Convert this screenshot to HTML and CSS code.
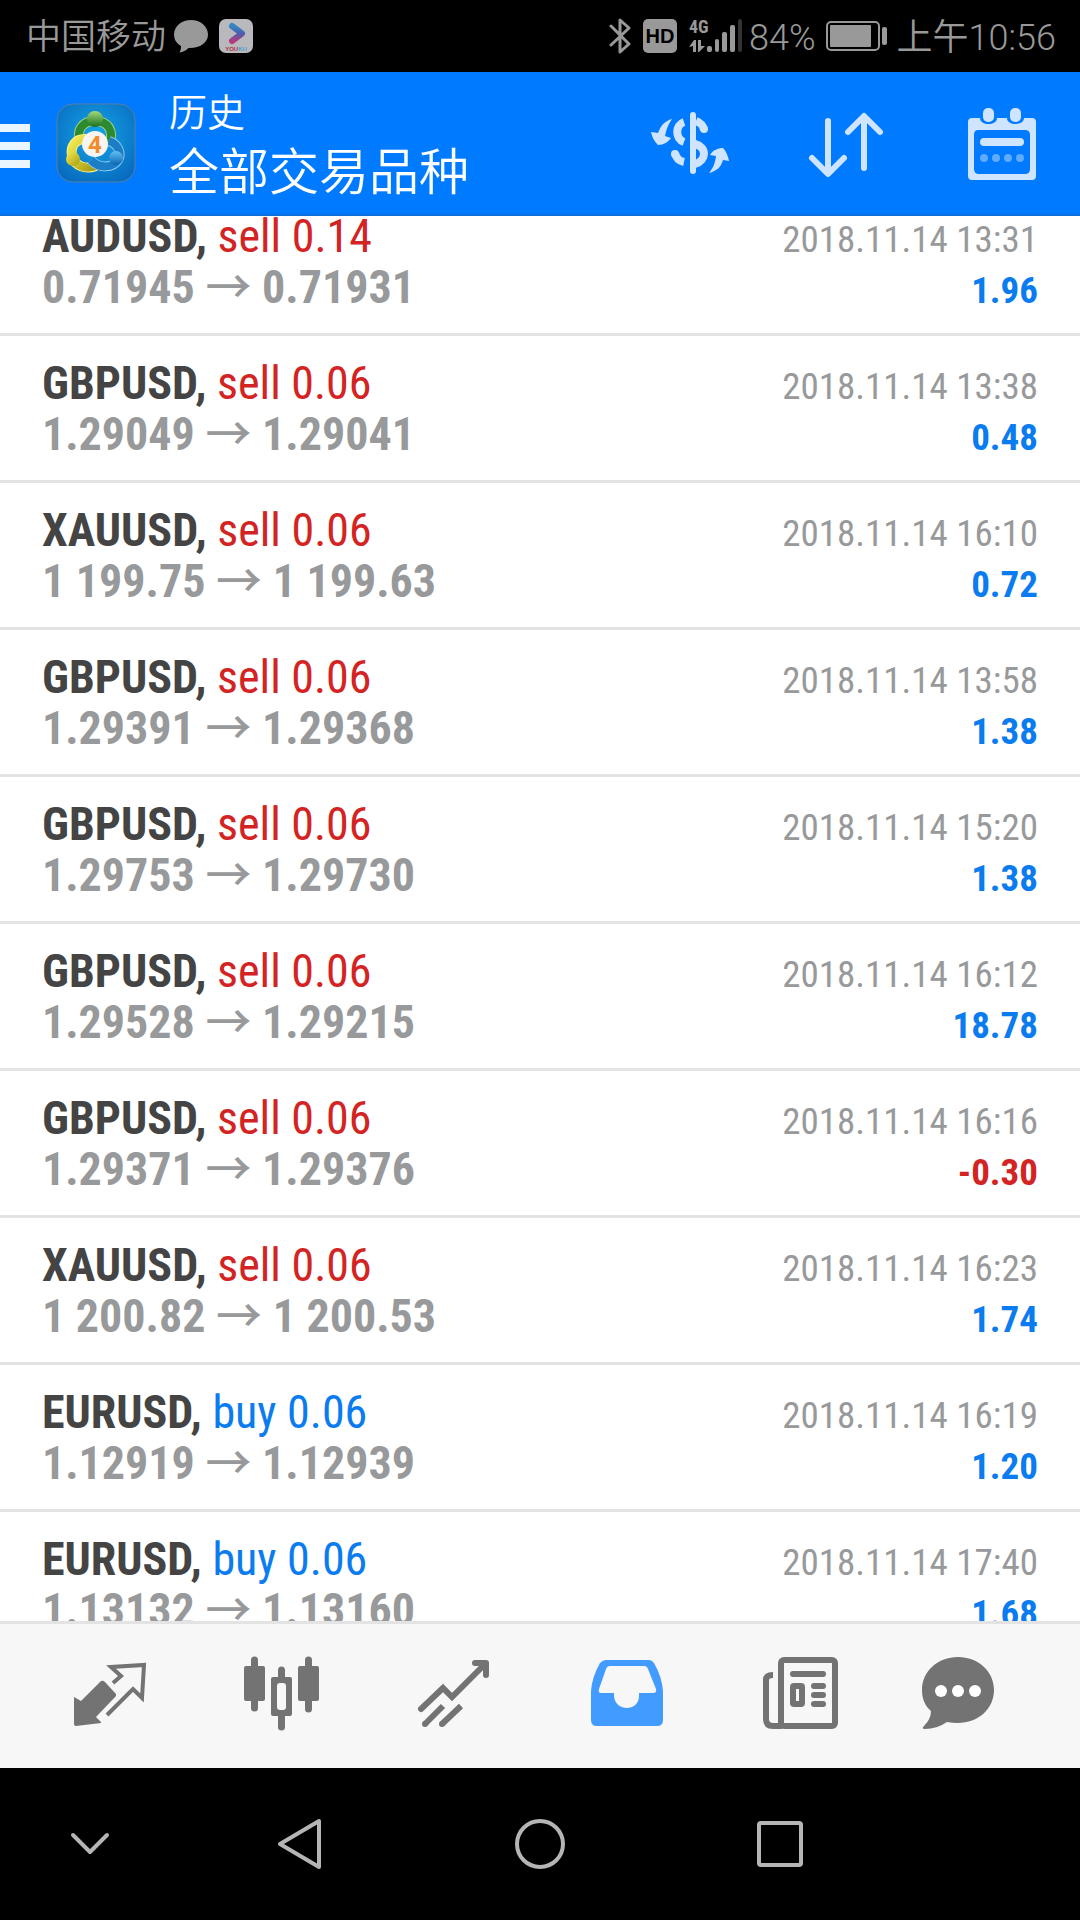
FILE: index.html
```html
<!DOCTYPE html>
<html lang="zh-CN">
<head>
<meta charset="utf-8">
<meta name="viewport" content="width=device-width, initial-scale=1">
<title>历史</title>
<link rel="stylesheet" href="styles.css">
</head>
<body>
<div class="app">
  <div class="status">
    <div class="status-side">
      <span class="status-text carrier">中国移动</span>
      <svg class="status-bubble" width="34" height="34" viewBox="0 0 34 34" aria-hidden="true"><path fill="#999" d="M17 1C8 1 0 7 0 15.500c0 5 2.500 9 7 11.500 0 3-.5 4.500-1.500 6.500 3.500-.5 6.500-2 9-4.500 11 .5 19.500-5 19.500-13.500C34 7 26 1 17 1z"/></svg>
      <svg width="34" height="34" viewBox="0 0 34 34" aria-hidden="true"><defs><linearGradient id="yk" x1="0" y1="0" x2="0" y2="1"><stop offset="0" stop-color="#3486c4"/><stop offset=".5" stop-color="#4a5fb0"/><stop offset="1" stop-color="#b5397c"/></linearGradient></defs><rect width="34" height="34" rx="7" fill="#b9b9bd"/><path d="M13 7l10 7.500L13 22" fill="none" stroke="url(#yk)" stroke-width="6" stroke-linecap="round" stroke-linejoin="round"/><text x="17" y="32" text-anchor="middle" class="tiny"><tspan fill="#b3323f">YOU</tspan><tspan fill="#4b9ccb">KU</tspan></text></svg>
    </div>
    <div class="status-side">
      <svg class="bluetooth" width="22" height="36" viewBox="0 0 22 36" fill="none" stroke="#999" stroke-width="3" stroke-linejoin="round" stroke-linecap="round" aria-label="蓝牙"><path d="M2 8l18 18-9 8V2l9 8L2 27"/></svg>
      <svg class="hd" width="34" height="34" viewBox="0 0 34 34" aria-hidden="true"><rect width="34" height="34" rx="5" fill="#999"/><text x="17" y="24" text-anchor="middle" class="hd-text">HD</text></svg>
      <svg class="signal" width="54" height="36" viewBox="0 0 54 36" fill="#999" aria-hidden="true"><text x="0" y="15" class="net-text">4G</text><path d="M0 29l5-7 2 0v12H4v-6zM9 22h3v6h4l-6 6H9z"/><rect x="18" y="28" width="5" height="6" rx="2"/><rect x="26" y="21" width="4" height="13" rx="2"/><rect x="33" y="14" width="5" height="20" rx="2"/><rect x="41" y="7" width="5" height="27" rx="2"/><rect x="49" y="1" width="4" height="33" rx="2" fill="#333"/></svg>
      <span class="status-text">84%</span>
      <svg class="battery" width="61" height="30" viewBox="0 0 61 30" aria-label="电池"><rect x="1" y="1" width="52" height="28" rx="4" fill="none" stroke="#999" stroke-width="2"/><rect x="4" y="4" width="41" height="22" rx="1" fill="#999"/><rect x="56" y="6" width="5" height="18" rx="2" fill="#999"/></svg>
      <span class="status-text">上午10:56</span>
    </div>
  </div>

  <header class="header">
    <button class="menu" type="button" aria-label="菜单"><span></span><span></span><span></span></button>
    <svg class="logo" width="80" height="80" viewBox="0 0 80 80" aria-hidden="true">
      <defs>
        <radialGradient id="bg" cx=".5" cy=".4" r=".7"><stop offset="0" stop-color="#16a5e6"/><stop offset="1" stop-color="#0768bd"/></radialGradient>
        <linearGradient id="gr" x1="0" y1="0" x2="0" y2="1"><stop offset="0" stop-color="#a5da79"/><stop offset="1" stop-color="#19701f"/></linearGradient>
        <linearGradient id="ye" x1="0" y1="0" x2="1" y2="1"><stop offset="0" stop-color="#f5ed51"/><stop offset="1" stop-color="#a79a12"/></linearGradient>
        <linearGradient id="bl" x1="0" y1="0" x2="0" y2="1"><stop offset="0" stop-color="#62c0f2"/><stop offset="1" stop-color="#0c65b1"/></linearGradient>
      </defs>
      <rect x="1" y="1" width="78" height="78" rx="16" fill="url(#bg)" stroke="#567fa5" stroke-width="1"/>
      <path d="M25 40C19 27 27 18 39 18s20 9 14 24" fill="none" stroke="#9ed284" stroke-width="10"/>
      <path d="M25 40C19 27 27 18 39 18s20 9 14 24" fill="none" stroke="#2c8a30" stroke-width="8"/>
      <path d="M30 36c-10-1-16 7-14 17 3 10 13 14 24 10" fill="none" stroke="#f7f28e" stroke-width="10"/>
      <path d="M30 36c-10-1-16 7-14 17 3 10 13 14 24 10" fill="none" stroke="url(#ye)" stroke-width="8"/>
      <path d="M53 38c9 3 13 12 9 19-5 8-19 9-27 0" fill="none" stroke="#86cbf0" stroke-width="10"/>
      <path d="M53 38c9 3 13 12 9 19-5 8-19 9-27 0" fill="none" stroke="#1c7cc6" stroke-width="8"/>
      <circle cx="39" cy="16" r="8" fill="url(#gr)"/><circle cx="17" cy="56" r="7" fill="url(#ye)"/><circle cx="60" cy="55" r="7" fill="url(#bl)"/>
      <circle cx="39" cy="41" r="13" fill="#f7f4f2"/><text x="39" y="50" text-anchor="middle" class="logo-text">4</text>
    </svg>
    <div class="titles"><h1>历史</h1><p>全部交易品种</p></div>
    <div class="actions">
      <button type="button" aria-label="货币"><svg width="80" height="76" viewBox="0 0 80 76"><path d="M1 27l7 1C11 20 15 16 22 14 18 20 16 25 15 31l6 2c-3 4-7 7-13 7C4 36 2 32 1 27zM79 56c-1-5-3-10-6-13-5 0-10 2-13 7l6 1c-1 8-3 12-7 17 8-2 12-6 14-13z" fill="#cfe5ff"/><path d="M34 17c-9 3-9 17 0 20M25 48c1 5 4 8 9 9M46 16c5 2 7 4 8 9M45 39c12 3 12 16 0 20" fill="none" stroke="#cfe5ff" stroke-width="8"/><circle cx="54" cy="24" r="4" fill="#cfe5ff"/><circle cx="25" cy="49" r="4" fill="#cfe5ff"/><path d="M43 10v56" stroke="#cfe5ff" stroke-width="6" stroke-linecap="round"/></svg></button>
      <button type="button" aria-label="排序"><svg width="80" height="76" viewBox="0 0 80 76" fill="none" stroke="#cfe5ff" stroke-width="6" stroke-linecap="round" stroke-linejoin="round"><path d="M22 16v52M6 53l16 16 16-16M58 63V12M42 27l16-16 16 16"/></svg></button>
      <button type="button" aria-label="日期"><svg width="80" height="76" viewBox="0 0 80 76"><path fill="#cfe5ff" fill-rule="evenodd" d="M10 13h8c0 8 17 8 17 0h10c0 8 17 8 17 0h8q4 0 4 4v54q0 4-4 4H10q-4 0-4-4V17q0-4 4-4zm6 12q-4 0-4 5v34q0 5 5 5h46q5 0 5-5V30q0-5-5-5z"/><rect x="21" y="3" width="11" height="14" rx="5" fill="#cfe5ff"/><rect x="48" y="3" width="11" height="14" rx="5" fill="#cfe5ff"/><rect x="18" y="33" width="44" height="8" rx="4" fill="#cfe5ff"/><g fill="#5fabff"><circle cx="22" cy="53" r="4"/><circle cx="34" cy="53" r="4"/><circle cx="46" cy="53" r="4"/><circle cx="58" cy="53" r="4"/></g></svg></button>
    </div>
  </header>

  <main class="history">
    <ul class="deals">
      <li><div class="line"><span class="deal"><b>AUDUSD,</b> <span class="sell">sell 0.14</span></span><time>2018.11.14 13:31</time></div><div class="line"><span class="price">0.71945 <i>→</i> 0.71931</span><span class="profit">1.96</span></div></li>
      <li><div class="line"><span class="deal"><b>GBPUSD,</b> <span class="sell">sell 0.06</span></span><time>2018.11.14 13:38</time></div><div class="line"><span class="price">1.29049 <i>→</i> 1.29041</span><span class="profit">0.48</span></div></li>
      <li><div class="line"><span class="deal"><b>XAUUSD,</b> <span class="sell">sell 0.06</span></span><time>2018.11.14 16:10</time></div><div class="line"><span class="price">1 199.75 <i>→</i> 1 199.63</span><span class="profit">0.72</span></div></li>
      <li><div class="line"><span class="deal"><b>GBPUSD,</b> <span class="sell">sell 0.06</span></span><time>2018.11.14 13:58</time></div><div class="line"><span class="price">1.29391 <i>→</i> 1.29368</span><span class="profit">1.38</span></div></li>
      <li><div class="line"><span class="deal"><b>GBPUSD,</b> <span class="sell">sell 0.06</span></span><time>2018.11.14 15:20</time></div><div class="line"><span class="price">1.29753 <i>→</i> 1.29730</span><span class="profit">1.38</span></div></li>
      <li><div class="line"><span class="deal"><b>GBPUSD,</b> <span class="sell">sell 0.06</span></span><time>2018.11.14 16:12</time></div><div class="line"><span class="price">1.29528 <i>→</i> 1.29215</span><span class="profit">18.78</span></div></li>
      <li><div class="line"><span class="deal"><b>GBPUSD,</b> <span class="sell">sell 0.06</span></span><time>2018.11.14 16:16</time></div><div class="line"><span class="price">1.29371 <i>→</i> 1.29376</span><span class="profit loss">-0.30</span></div></li>
      <li><div class="line"><span class="deal"><b>XAUUSD,</b> <span class="sell">sell 0.06</span></span><time>2018.11.14 16:23</time></div><div class="line"><span class="price">1 200.82 <i>→</i> 1 200.53</span><span class="profit">1.74</span></div></li>
      <li><div class="line"><span class="deal"><b>EURUSD,</b> <span class="buy">buy 0.06</span></span><time>2018.11.14 16:19</time></div><div class="line"><span class="price">1.12919 <i>→</i> 1.12939</span><span class="profit">1.20</span></div></li>
      <li><div class="line"><span class="deal"><b>EURUSD,</b> <span class="buy">buy 0.06</span></span><time>2018.11.14 17:40</time></div><div class="line"><span class="price">1.13132 <i>→</i> 1.13160</span><span class="profit">1.68</span></div></li>
    </ul>
  </main>

  <nav class="tabs">
    <button type="button" aria-label="行情"><svg width="120" height="80" viewBox="0 0 120 80"><path fill="#737373" d="M25 41l7 4 20-20q2-1 4 1l11 12v2L47 61l5 5v1l-25 3q-2 0-2-2z"/><path fill="none" stroke="#737373" stroke-width="4" d="M64 27l8-7-10-9 33-2-2 33-9-9-26 26"/></svg></button>
    <button type="button" aria-label="图表"><svg width="120" height="80" viewBox="0 0 120 80" fill="#737373"><path d="M35.500 4v48M62.500 14v57M89.500 4v49" stroke="#737373" stroke-width="7" stroke-linecap="round"/><rect x="25" y="10" width="21" height="35" rx="2"/><rect x="79" y="10" width="21" height="35" rx="2"/><rect x="52" y="21" width="21" height="39" rx="2"/><rect x="58" y="27" width="9" height="27" rx="3" fill="#f7f7f7"/></svg></button>
    <button type="button" aria-label="交易"><svg width="120" height="80" viewBox="0 0 120 80" fill="none" stroke="#737373" stroke-width="6"><path stroke-linecap="round" d="M32 53l22-21 9 9 33-33M36 68h0M53 68h0"/><path stroke-linecap="round" stroke-linejoin="round" d="M86 7h11v12"/><path d="M36 68l18-18M53 68l19-18"/></svg></button>
    <button type="button" aria-label="历史" aria-current="page"><svg width="120" height="80" viewBox="0 0 120 80"><path fill="#429bff" fill-rule="evenodd" d="M47 4h43q3 0 5 3 8 14 9 28v29q0 6-6 6H38q-6 0-6-6V35q1-14 9-28 3-3 6-3zm4 6q-3 0-4 3l-7 20q-1 4 2 4h13v3c1 16 25 16 25 0v-3h14q4 0 3-4l-8-20q-1-3-4-3z"/></svg></button>
    <button type="button" aria-label="新闻"><svg width="120" height="80" viewBox="0 0 120 80" fill="none" stroke="#737373" stroke-width="6"><rect x="52" y="4" width="54" height="66" rx="3"/><path d="M44 19q-7 0-7 5v39q0 7 7 7h9"/><path stroke-linecap="round" d="M64 18h30M85 30h9M85 39h9M85 48h9"/><rect x="64" y="30" width="9" height="18" rx="1"/></svg></button>
    <button type="button" aria-label="消息"><svg width="120" height="80" viewBox="0 0 120 80"><path fill="#737373" d="M59 1c20 0 36 14 36 33S79 67 59 67q-6 0-11-1-10 7-22 7-4 0-1-3 7-7 7-15C26 50 23 43 23 34 23 15 39 1 59 1z"/><g fill="#fff"><circle cx="42" cy="35" r="6"/><circle cx="59" cy="35" r="6"/><circle cx="76" cy="35" r="6"/></g></svg></button>
  </nav>

  <nav class="system" aria-label="系统导航">
    <button type="button" aria-label="收起"><svg width="56" height="56" viewBox="0 0 56 56"><path d="M11 19l17 17 17-17"/></svg></button>
    <button type="button" aria-label="返回"><svg width="56" height="56" viewBox="0 0 56 56"><path d="M8 28L47 5v46z"/></svg></button>
    <button type="button" aria-label="主屏幕"><svg width="56" height="56" viewBox="0 0 56 56"><circle cx="28" cy="28" r="23"/></svg></button>
    <button type="button" aria-label="最近任务"><svg width="56" height="56" viewBox="0 0 56 56"><rect x="7" y="7" width="42" height="42" rx="2"/></svg></button>
  </nav>
</div>
</body>
</html>
```
FILE: styles.css
```css
* { box-sizing: border-box; }

body {
  margin: 0;
  font-family: Roboto, "Noto Sans CJK SC", sans-serif;
  background: #000;
}

button {
  padding: 0;
  border: 0;
  background: none;
  display: flex;
  align-items: center;
  justify-content: center;
}

.app {
  height: 100vh;
  display: flex;
  flex-direction: column;
}

/* Phone status bar */
.status {
  flex: none;
  height: 72px;
  padding: 0 24px 0 26px;
  display: flex;
  align-items: center;
  justify-content: space-between;
  color: #999;
  font-size: 36px;
  line-height: 40px;
  font-weight: 350;
  white-space: nowrap;
}
.status-side { display: flex; align-items: center; }
.status-text { padding-top: 4px; }
.carrier { font-size: 35px; }
.status-bubble { margin: 0 11px 0 8px; }
.hd { margin: 0 12px; }
.signal { margin-right: 6px; }
.battery { margin: 0 10px; }
.tiny { font: bold 6px "Liberation Sans", sans-serif; }
.hd-text { font: bold 20px "Liberation Sans", sans-serif; fill: #000; }
.net-text { font: bold 18px "Roboto Condensed", "Liberation Sans Narrow", sans-serif; }
.logo-text { font: bold 24px Roboto, sans-serif; fill: #f08c2c; }

/* App header */
.header {
  flex: none;
  height: 144px;
  display: flex;
  align-items: center;
  background: #007aff;
  border-bottom: 2px solid #0b6fdb;
  color: #fff;
}
.menu {
  width: 30px;
  padding-top: 6px;
  margin-right: 26px;
  flex-direction: column;
  gap: 10px;
}
.menu span { width: 100%; height: 8px; background: #eaf6ff; }
.logo { margin-right: 33px; }
.titles {
  flex: 1;
  padding-top: 6px;
  font-weight: 350;
  white-space: nowrap;
}
.titles h1 {
  margin: 0;
  font-size: 38px;
  font-weight: 350;
  line-height: 54px;
}
.titles p { margin: 0; font-size: 50px; line-height: 66px; }
.actions { display: flex; }
.actions button { width: 156px; height: 142px; }

/* Deal history */
.history {
  flex: 1;
  min-height: 0;
  overflow: hidden;
  background: #fff;
}
.deals {
  margin: -27px 0 0;
  padding: 0;
  list-style: none;
  font-family: "Roboto Condensed", "Liberation Sans Narrow", sans-serif;
  white-space: nowrap;
}
.deals li { padding: 22px 42px 20px; border-bottom: 3px solid #e3e3e3; }
.line {
  display: flex;
  align-items: baseline;
  justify-content: space-between;
  font-size: 46px;
  line-height: 51px;
}
.deal b { color: #444; }
.sell, .profit.loss { color: #d32323; }
.buy { color: #0a7cef; }
.price { color: #98999b; font-weight: bold; }
.price i { font: 500 46px/40px "Noto Sans", "Noto Sans CJK SC", sans-serif; }
time, .profit { font-size: 37px; line-height: 45px; }
time { color: #98999b; }
.profit { color: #0a7cef; font-weight: bold; }

/* Bottom tabs */
.tabs {
  flex: none;
  height: 147px;
  padding: 0 36px 0 24px;
  display: grid;
  grid-template-columns: repeat(6, 1fr);
  background: #f7f7f7;
  border-top: 3px solid #e3e3e3;
}

/* Phone navigation keys */
.system {
  flex: none;
  height: 152px;
  display: grid;
  grid-template-columns: 3fr 4fr 4fr 4fr 3fr;
}
.system svg {
  fill: none;
  stroke: #b5b5b5;
  stroke-width: 4;
  stroke-linecap: round;
  stroke-linejoin: round;
}
```
